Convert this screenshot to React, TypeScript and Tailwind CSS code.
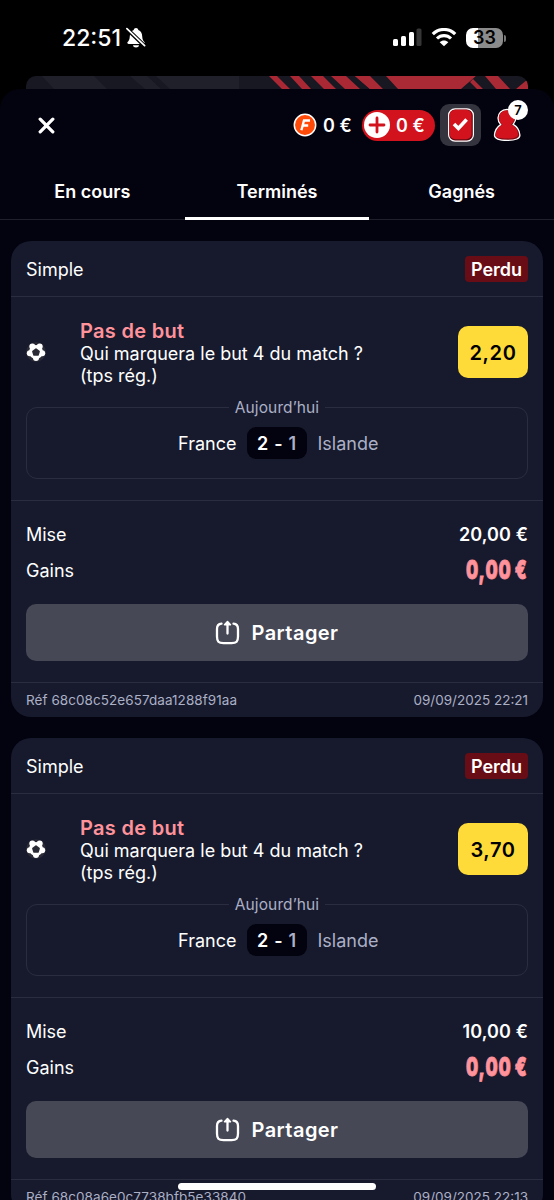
type Bet = { odds: string; stake: string; reference: string; date: string };

const bets: Bet[] = [
  { odds: "2,20", stake: "20,00 €", reference: "68c08c52e657daa1288f91aa", date: "09/09/2025 22:21" },
  { odds: "3,70", stake: "10,00 €", reference: "68c08a6e0c7738bfb5e33840", date: "09/09/2025 22:13" },
];

function StatusBar() {
  return (
    <div className="flex h-[76px] shrink-0 items-start justify-between bg-black pt-[25px] pr-[48px] pl-[62px]">
      <div className="flex items-start">
        <span className="text-[23px] leading-[26px] font-medium">22:51</span>
        <svg className="mt-[2px] ml-[5px]" width="20" height="22" viewBox="0 0 20 22">
          <path d="M10 1c1.300 0 2.100.8 2.300 1.900 2.800 1 3.800 3.300 3.900 6.300.1 3.500 1.200 4.800 2.200 5.900.8 1-.1 1.900-1.100 1.900H2.700c-1 0-1.900-.9-1.100-1.900 1-1.100 2.100-2.400 2.200-5.900.1-3 1.100-5.300 3.900-6.300C7.900 1.800 8.700 1 10 1z" fill="#fff" />
          <path d="M7 18.300h6c-.2 1.300-1.400 2.300-3 2.300s-2.800-1-3-2.300z" fill="#fff" />
          <path d="M.2 1.200L19 19.200" stroke="#000" strokeWidth="4" />
          <path d="M.9 1.700L18.600 18.700" stroke="#fff" strokeWidth="1.700" strokeLinecap="round" />
        </svg>
      </div>
      <div className="flex items-start pt-[3px]">
        <svg width="29" height="19" viewBox="0 0 29 19">
          <rect x="0" y="11" width="5" height="7" rx="1.500" fill="#fff" />
          <rect x="8" y="8" width="5" height="10" rx="1.500" fill="#fff" />
          <rect x="16" y="4" width="5" height="14" rx="1.500" fill="#fff" />
          <rect x="23.500" y="0.500" width="5" height="17.500" rx="1.500" fill="#363636" />
        </svg>
        <svg className="ml-[9px]" width="26" height="19" viewBox="0 0 26 19">
          <path d="M1.800 6.200C8-.1 18-.1 24.200 6.200" fill="none" stroke="#fff" strokeWidth="3.200" />
          <path d="M6 10.500c4-3.900 10-3.900 14 0" fill="none" stroke="#fff" strokeWidth="3.100" />
          <path d="M8.700 14.200c2.500-2.300 6.100-2.300 8.600 0L13 18.300z" fill="#fff" />
        </svg>
        <div className="ml-[9px] flex items-center">
          <div className="flex h-[20px] w-[37px] items-center justify-center rounded-[7px] bg-[linear-gradient(90deg,#fff_0_12px,#8b8b8b_12px)] text-[18px] leading-5 font-semibold text-black">33</div>
          <div className="ml-[1px] h-[7px] w-[2px] rounded-r-full bg-[#777]" />
        </div>
      </div>
    </div>
  );
}

function Banner() {
  return (
    <div className="h-[30px] shrink-0 px-[26px]">
      <svg className="block rounded-t-[10px]" width="502" height="30" viewBox="26 76 502 30">
        <rect x="26" y="76" width="502" height="30" fill="#181822" />
        <path d="M42 76h52l13 13H54zM156 76h83v13h-69zM130 76h17l14 13h-16z" fill="#20202b" />
        <path d="M269 76h8l13 13h-8zM290 76h9l12 13h-9zM311 76h12l13 13h-12zM331 76h15l14 13h-15zM355 76h20l14 13h-19z" fill="#aa2834" />
        <path d="M355 76h15l13 13h-13zM385 76h91l-15 13h-64z" fill="#a92934" />
        <path d="M370 76h16l12 13h-15zM470 82l8 7h-16zM476 76h9l12 13h-14l-9-10z" fill="#181822" />
        <path d="M473 79l10 10h-6l-7-7zM485 76h13l12 13h-14zM528 79v10h-12z" fill="#a92934" />
      </svg>
    </div>
  );
}

function Header() {
  return (
    <header className="flex h-[72px] shrink-0 items-center justify-between pr-[26px] pl-[38px]">
      <svg width="17" height="17" viewBox="0 0 17 17">
        <path d="M2.200 2.200l12.600 12.600M14.800 2.200L2.200 14.800" stroke="#fff" strokeWidth="3.300" strokeLinecap="round" />
      </svg>
      <div className="flex items-center">
        <svg width="24" height="24" viewBox="0 0 24 24">
          <circle cx="12" cy="12" r="10.700" fill="#ff4a08" stroke="#fff" strokeWidth="1.500" />
          <path d="M8.400 17.300L11 7.500h6M9.600 12.500h5.600" fill="none" stroke="#fff" strokeWidth="2.400" />
        </svg>
        <span className="ml-[6px] w-[29px] pt-px text-[18px] leading-6 font-semibold whitespace-nowrap">0 €</span>
        <div className="ml-[10px] flex h-[31px] w-[73px] items-center rounded-full bg-[#d2131d] pl-[2px]">
          <svg width="26" height="26" viewBox="0 0 26 26">
            <circle cx="13" cy="13" r="13" fill="#fff" />
            <path d="M13 6v14M6 13h14" stroke="#d2131d" strokeWidth="2.800" strokeLinecap="round" />
          </svg>
          <span className="ml-[6px] pt-px text-[18px] leading-6 font-semibold whitespace-nowrap">0 €</span>
        </div>
        <div className="ml-[5px] flex h-[42px] w-[41px] items-center justify-center rounded-[9px] bg-[#34343f]">
          <svg width="28" height="34" viewBox="0 0 28 34">
            <rect x="1.600" y="0.800" width="24.800" height="32.400" rx="6.500" fill="#650b13" stroke="#fff" strokeWidth="1.200" />
            <rect x="2.600" y="1.700" width="22" height="29.500" rx="5.500" fill="#d2131d" />
            <path d="M7 16l4.400 4.500 8.200-9" fill="none" stroke="#fff" strokeWidth="3.600" />
          </svg>
        </div>
        <div className="relative ml-[12px] h-[42px] w-[35px]">
          <svg className="mt-[4px]" width="30" height="34" viewBox="0 0 30 34">
            <path d="M14 1.500c5.200 0 8.800 3.600 8.800 8.600 0 2.600-1 4.500-2.600 6.300 3.800 2.200 6.300 6 6.700 10.600.3 3.400-4.200 5.400-12.500 5.400S1.300 30.700 1.500 27.100c.3-4.500 2.600-8.200 6.200-10.500-1.700-1.700-2.700-3.800-2.700-6.500 0-5 3.800-8.600 9-8.600z" fill="#780d15" stroke="#fff" strokeWidth="1.300" />
            <path d="M13.500 2.500c4.600 0 7.800 3.100 7.800 7.600 0 2.900-1.200 5-3.300 6.500 4.100 1.600 6.800 5.500 7 9.600.2 3-4 4.300-11 4.300s-11.700-1-11.500-3.700c.3-4.200 3-8 7-10C7.300 15.300 6 13 6 10.100c0-4.500 3.200-7.600 7.500-7.600z" fill="#d2131d" />
          </svg>
          <span className="absolute top-[-4px] right-0 flex size-[20px] items-center justify-center rounded-full bg-white text-[13px] leading-none font-semibold text-black">7</span>
        </div>
      </div>
    </header>
  );
}

function Tabs() {
  return (
    <nav className="grid h-[59px] shrink-0 grid-cols-3 border-b border-[#20202d] text-center text-[18px] leading-[61px] font-semibold">
      <span>En cours</span>
      <span className="h-[59px] border-b-[3px] border-white">Terminés</span>
      <span>Gagnés</span>
    </nav>
  );
}

function Ball() {
  return (
    <svg width="20" height="20" viewBox="0 0 20 20">
      <circle cx="10" cy="10" r="9.800" fill="#2b2b37" />
      <g fill="#fff">
        <circle cx="6.300" cy="4.500" r="3" />
        <circle cx="13.700" cy="4.500" r="3" />
        <circle cx="16.200" cy="11.300" r="3" />
        <circle cx="10" cy="15.900" r="3" />
        <circle cx="3.800" cy="11.300" r="3" />
        <circle cx="10" cy="10" r="7" />
      </g>
      <path d="M10 7.200l3 2.200-1.100 3.500H8.100L7 9.400z" fill="#2b2b35" stroke="#2b2b35" strokeWidth="1.800" strokeLinejoin="round" />
    </svg>
  );
}

function BetCard({ bet }: { bet: Bet }) {
  return (
    <article className="mx-[11px] flex h-[476px] shrink-0 flex-col rounded-[20px] bg-[#171a2d] text-[18px]">
      <div className="flex h-[56px] shrink-0 items-center justify-between border-b border-[#2a2d40] px-[15px]">
        <span className="pt-px">Simple</span>
        <span className="flex h-[26px] w-[63px] items-center justify-center rounded-[4px] bg-[#680d15] pt-px font-semibold">Perdu</span>
      </div>
      <div className="flex h-[204px] shrink-0 flex-col border-b border-[#2a2d40] px-[15px] pt-[22px]">
        <div className="flex h-[77px] shrink-0">
          <div className="flex h-[66px] w-[54px] shrink-0 items-center"><Ball /></div>
          <div className="flex-1 whitespace-nowrap">
            <div className="text-[20px] leading-[24px] font-semibold tracking-[0.300px] text-[#ff929b]">Pas de but</div>
            <div className="leading-[21.500px]">Qui marquera le but 4 du match ?<br />(tps rég.)</div>
          </div>
          <div className="mt-[7px] flex h-[52px] w-[70px] items-center justify-center rounded-[10px] bg-[#fedb38] pt-px text-[20px] font-semibold tracking-[0.600px] text-black">{bet.odds}</div>
        </div>
        <fieldset className="flex h-[83px] items-start justify-center rounded-[11px] border border-[#2a2d40] pt-[8px]">
          <legend className="mx-auto px-[6px] text-[15.500px] leading-[23px] tracking-[0.100px] text-[#abb0c6]">Aujourd’hui</legend>
          <div className="grid w-full grid-cols-[1fr_60px_1fr] items-center gap-x-[10.500px]">
            <span className="text-right">France</span>
            <span className="flex h-[32px] items-center justify-center rounded-[9px] bg-[#03020f] font-semibold tracking-[0.700px] whitespace-pre">2 - <span className="text-[#abb0c6]">1</span></span>
            <span className="text-[#abb0c6]">Islande</span>
          </div>
        </fieldset>
      </div>
      <div className="flex h-[182px] shrink-0 flex-col border-b border-[#2a2d40] px-[15px] pt-[15px]">
        <div className="flex h-9 items-center justify-between"><span>Mise</span><span className="font-semibold tracking-[0.100px]">{bet.stake}</span></div>
        <div className="flex h-9 items-center justify-between">
          <span>Gains</span>
          <span className="flex origin-right scale-x-[0.66] items-center text-[26px] leading-9 font-black tracking-[1.500px] whitespace-nowrap text-[#ff929b] [-webkit-text-stroke:0.800px_#ff929b] [word-spacing:-2px]">0,00 €</span>
        </div>
        <button className="mt-[16px] flex h-[57px] w-full shrink-0 items-center justify-center rounded-[10px] bg-[#464856] text-[20px] font-semibold tracking-[0.450px]">
          <svg className="mr-[11px]" width="25" height="25" viewBox="0 0 25 25" fill="none" stroke="#fff" strokeWidth="2.300" strokeLinecap="round">
            <path d="M6.500 3.700C3.300 4 2 5.700 2 9v7.500c0 5 1.500 6.700 6.500 6.700h8c5 0 6.500-1.700 6.500-6.700V9c0-3.300-1.300-5-4.500-5.300" />
            <path d="M12.500 13.500V3" /><path d="M9.500 4.700l3-3.200 3 3.200z" fill="#fff" strokeLinejoin="round" strokeWidth="1.500" />
          </svg>
          Partager
        </button>
      </div>
      <div className="flex h-[34px] items-center justify-between px-[15px] text-[13.500px] text-[#abb0c6]"><span className="tracking-[0.060px]">Réf {bet.reference}</span><span>{bet.date}</span></div>
    </article>
  );
}

export default function App() {
  return (
    <main className="relative flex h-[1200px] w-[554px] flex-col overflow-hidden bg-black font-['Inter',sans-serif] text-white">
      <StatusBar />
      <Banner />
      <section className="relative -mt-[17px] flex h-[1111px] shrink-0 flex-col overflow-hidden rounded-t-[20px] bg-[#03020f]">
        <Header />
        <Tabs />
        <div className="flex flex-col gap-[21px] pt-[21px]">
          {bets.map((bet) => <BetCard key={bet.reference} bet={bet} />)}
        </div>
      </section>
      <div className="absolute bottom-[10px] left-[178px] h-[7px] w-[198px] rounded-full bg-white" />
    </main>
  );
}
